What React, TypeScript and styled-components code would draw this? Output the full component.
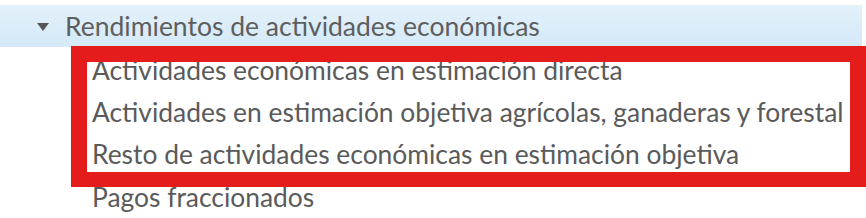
import React from "react";
import styled, { createGlobalStyle } from "styled-components";

const GlobalStyle = createGlobalStyle`
  html, body { margin: 0; padding: 0; background: #ffffff; }
  body { font-family: Lato, "Open Sans", sans-serif; }
`;

const Page = styled.div`
  position: relative;
  width: 866px;
  height: 218px;
  padding-top: 5px;
  box-sizing: border-box;
  overflow: hidden;
`;

const Header = styled.div`
  width: 862px;
  height: 42px;
  display: flex;
  align-items: center;
  gap: 16px;
  padding-left: 37px;
  box-sizing: border-box;
  background: linear-gradient(to bottom, #e3f1fb 0%, #d4e9f7 100%);
`;

const Caret = styled.span`
  width: 0;
  height: 0;
  border-left: 6.5px solid transparent;
  border-right: 6.5px solid transparent;
  border-top: 8px solid #555555;
  margin-top: 1px;
`;

const HeaderLabel = styled.span`
  font-size: 26.5px;
  line-height: 42px;
  color: #5e5e5e;
  white-space: nowrap;
`;

const List = styled.ul`
  list-style: none;
  margin: 0;
  padding: 1.7px 0 0 92px;
`;

const Item = styled.li`
  font-size: 26.4px;
  line-height: 42.33px;
  color: #5a5a5a;
  white-space: nowrap;
`;

const Highlight = styled.div`
  position: absolute;
  left: 71px;
  top: 46px;
  width: 795px;
  height: 141px;
  box-sizing: border-box;
  border: 16px solid #e41c1c;
  border-bottom-width: 15px;
  pointer-events: none;
`;

const items = [
  "Actividades económicas en estimación directa",
  "Actividades en estimación objetiva agrícolas, ganaderas y forestal",
  "Resto de actividades económicas en estimación objetiva",
  "Pagos fraccionados",
];

export default function App() {
  return (
    <>
      <GlobalStyle />
      <Page>
        <Header>
          <Caret />
          <HeaderLabel>Rendimientos de actividades económicas</HeaderLabel>
        </Header>
        <List>
          {items.map((t) => (
            <Item key={t}>{t}</Item>
          ))}
        </List>
        <Highlight />
      </Page>
    </>
  );
}
